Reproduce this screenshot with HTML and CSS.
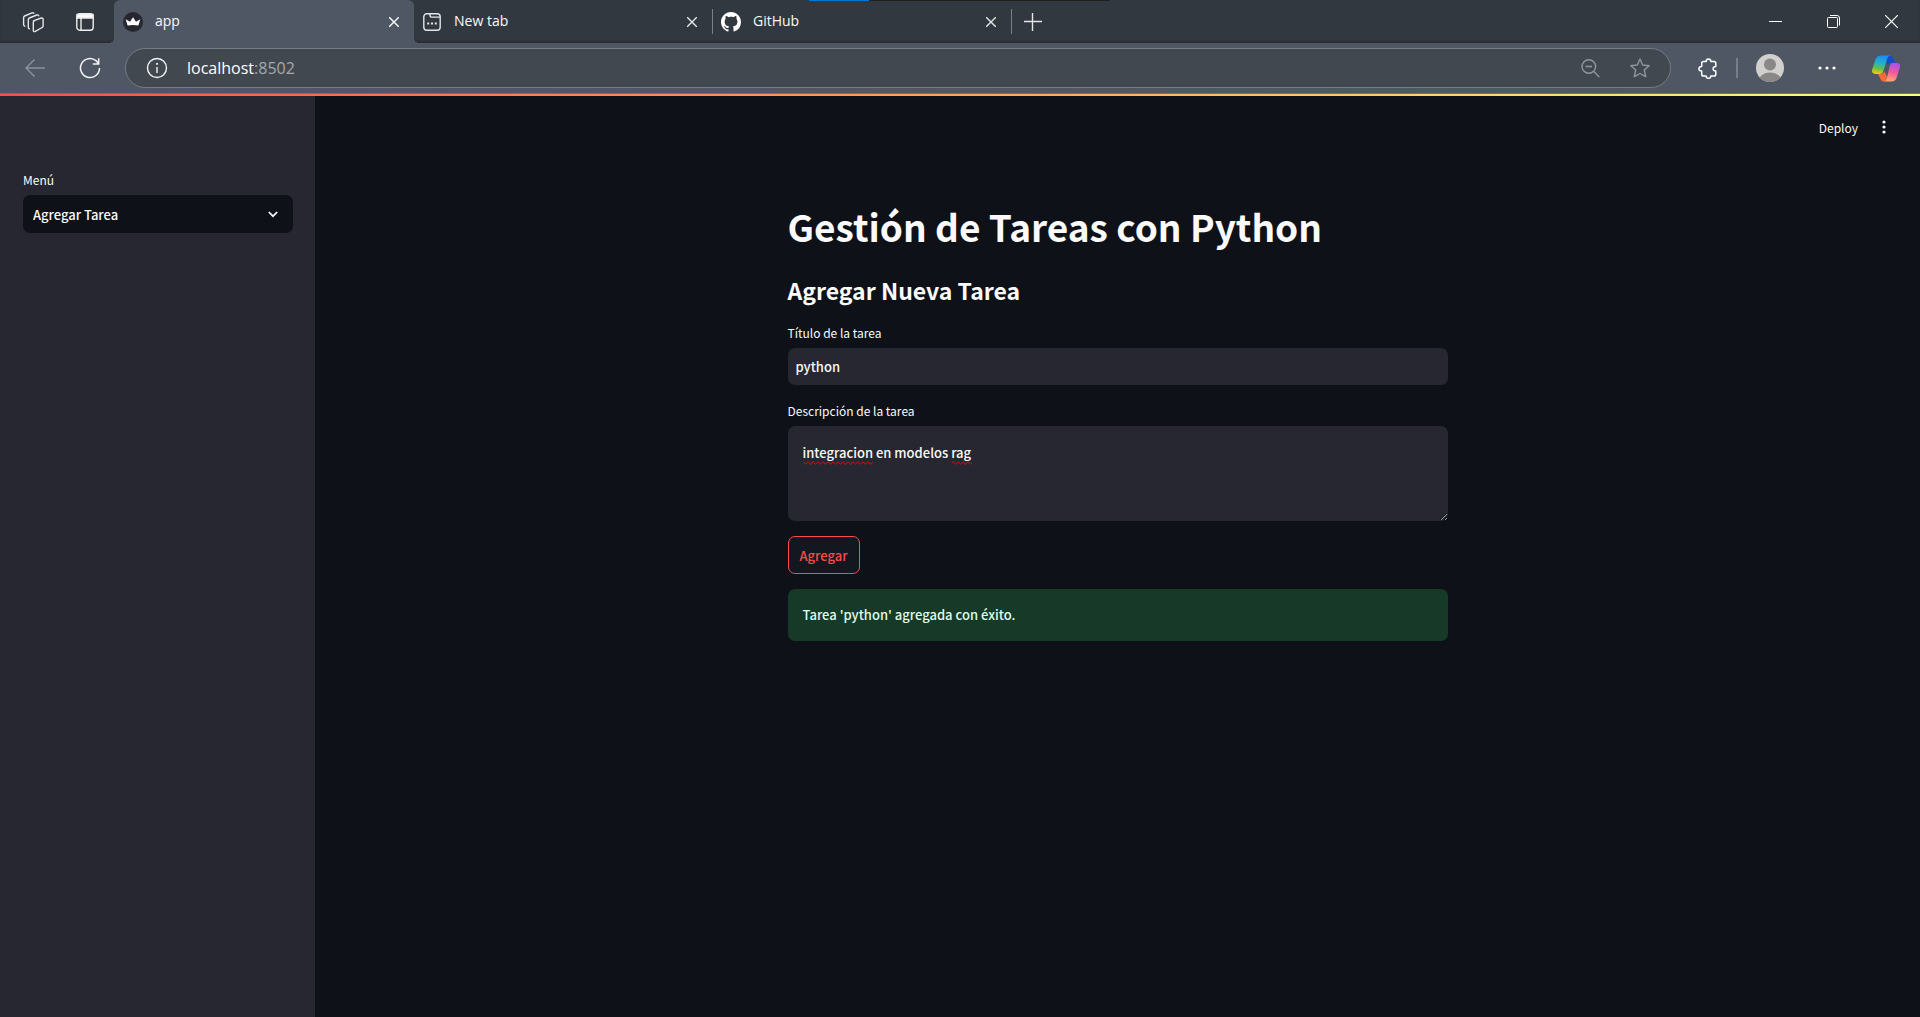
FILE: index.html
```html
<!DOCTYPE html>
<html lang="es">
<head>
<meta charset="utf-8">
<title>app</title>
<link rel="stylesheet" href="styles.css">
</head>
<body>
<header class="browser">
  <div class="tabstrip">
    <div class="tab-tools">
      <button class="icon-btn" aria-label="Workspaces"><svg width="22" height="22" viewBox="0 0 22 22" fill="none" stroke="#e4e6e8" stroke-width="1.4" stroke-linejoin="round" stroke-linecap="round"><path d="M11.400 9.800 19.200 7q1.900-.5 1.900 1.200V15q0 1-1 1.500L13.300 20.400q-1.800.8-2-1V11.400q0-1 .8-1.400zM7.300 17.800q-1-.2-1-1.500V8.800q0-1.300 1-1.800l7.500-3q1.400-.4 1.900.8M2.800 15.200q-1.200-.4-1.200-1.700V6.800q0-1.300 1-1.800l7.400-3.200q1.200-.5 1.900.5"/></svg></button>
      <button class="icon-btn" aria-label="Vertical tabs"><svg width="18" height="18" viewBox="0 0 18 18" fill="none" stroke="#eceeef" stroke-width="1.4"><rect x=".8" y=".8" width="16.400" height="16.400" rx="3"/><path d="M1 1.500h16V5H1z" fill="#fff"/><path d="M5 5v12"/></svg></button>
    </div>
    <div class="tab tab-active">
      <svg width="20" height="20" viewBox="0 0 20 20"><circle cx="10" cy="10" r="10" fill="#262730"/><path d="M2.700 7.300 7 9.800 10 5.300l3 4.500 4.300-2.500-1.900 6.200q-5.400-1-10.800 0z" fill="#fff"/></svg>
      <span class="tab-title">app</span>
      <button class="tab-close" aria-label="Close app"><svg width="10" height="10" viewBox="0 0 10 10" stroke="#fff" stroke-width="1.400"><path d="M0 0l10 10M10 0 0 10"/></svg></button>
    </div>
    <div class="tab tab-ruled">
      <svg width="20" height="18" viewBox="0 0 20 18" fill="none" stroke="#e4e6e8" stroke-width="1.400"><rect x="1.800" y=".8" width="16.400" height="16.400" rx="3"/><path d="M8 1v1.600q0 1.500 1.500 1.500H18"/><path d="M5.200 10.500h2M9 10.500h2M12.800 10.500h2" stroke-width="2"/></svg>
      <span class="tab-title">New tab</span>
      <button class="tab-close" aria-label="Close New tab"><svg width="10" height="10" viewBox="0 0 10 10" stroke="#e4e6e8" stroke-width="1.400"><path d="M0 0l10 10M10 0 0 10"/></svg></button>
    </div>
    <div class="tab tab-ruled">
      <svg width="20" height="20" viewBox="0 0 16 16" fill="#fff"><path d="M8 0C3.580 0 0 3.580 0 8c0 3.540 2.290 6.530 5.470 7.590.4.070.55-.17.55-.38 0-.19-.01-.82-.01-1.490-2.010.37-2.530-.49-2.690-.94-.09-.23-.48-.94-.82-1.130-.28-.15-.68-.52-.01-.53.63-.01 1.080.58 1.230.82.72 1.210 1.870.87 2.330.66.07-.52.28-.87.51-1.070-1.780-.2-3.640-.89-3.640-3.950 0-.87.31-1.590.82-2.150-.08-.2-.36-1.020.08-2.120 0 0 .67-.21 2.200.82.64-.18 1.320-.27 2-.27s1.360.09 2 .27c1.530-1.040 2.200-.82 2.200-.82.44 1.100.16 1.920.08 2.120.51.56.82 1.270.82 2.150 0 3.070-1.870 3.750-3.650 3.950.29.25.54.73.54 1.480 0 1.070-.01 1.930-.01 2.200 0 .21.15.46.55.38A8.010 8.010 0 0 0 16 8c0-4.420-3.580-8-8-8z"/></svg>
      <span class="tab-title">GitHub</span>
      <button class="tab-close" aria-label="Close GitHub"><svg width="10" height="10" viewBox="0 0 10 10" stroke="#e4e6e8" stroke-width="1.400"><path d="M0 0l10 10M10 0 0 10"/></svg></button>
    </div>
    <button class="new-tab" aria-label="New tab"><svg width="18" height="18" viewBox="0 0 18 18" stroke="#e4e6e8" stroke-width="1.400"><path d="M0 8.500h18M8.500 0v18"/></svg></button>
    <div class="window-controls">
      <button aria-label="Minimize"><svg width="13" height="13" viewBox="0 0 13 13" stroke="#fff"><path d="M0 6.500h13"/></svg></button>
      <button aria-label="Restore"><svg width="13" height="13" viewBox="0 0 13 13" fill="none" stroke="#fff"><rect x=".5" y="2.500" width="10" height="10" rx="1"/><path d="M3 .5h7q2.500 0 2.500 2.500v7.500"/></svg></button>
      <button aria-label="Close window"><svg width="13" height="13" viewBox="0 0 13 13" stroke="#fff" stroke-width="1.200"><path d="M0 0l13 13M13 0 0 13"/></svg></button>
    </div>
    <div class="top-progress"></div>
  </div>
  <div class="toolbar">
    <button class="icon-btn" aria-label="Back"><svg width="20" height="18" viewBox="0 0 20 18" fill="none" stroke="#8d939b" stroke-width="1.400"><path d="M20 9H1M9.500.5 1 9l8.500 8.500"/></svg></button>
    <button class="icon-btn" aria-label="Refresh"><svg width="22" height="22" viewBox="0 0 22 22" fill="none" stroke="#f2f3f4" stroke-width="1.500"><path d="M20.500 11a9.500 9.500 0 1 1-3.200-7.100L19.500 6.500M19.700 1.300v5.600h-5.900"/></svg></button>
    <div class="address">
      <svg width="22" height="22" viewBox="0 0 22 22" fill="none" stroke="#f2f3f4" stroke-width="1.400"><circle cx="11" cy="11" r="9.500"/><path d="M11 10v6" /><path d="M11 6v1.800" stroke-width="1.800"/></svg>
      <span class="url">localhost<span class="port">:8502</span></span>
      <button class="icon-btn" aria-label="Zoom out"><svg width="19" height="19" viewBox="0 0 19 19" fill="none" stroke="#92969b" stroke-width="1.400"><circle cx="7.800" cy="7.500" r="6.800"/><path d="M4.500 7.500h6.500M12.800 12.500l5.500 5.500"/></svg></button>
      <button class="icon-btn" aria-label="Add to favorites"><svg width="20" height="20" viewBox="0 0 20 20" fill="none" stroke="#92969b" stroke-width="1.400" stroke-linejoin="round"><path d="M10 1l2.700 6 6.500.7-4.900 4.300 1.400 6.700L10 15.500l-5.700 3.200L5.700 12 .8 7.700 7.300 7z"/></svg></button>
    </div>
    <button class="icon-btn" aria-label="Extensions"><svg width="20" height="21" viewBox="0 0 20 21" fill="none" stroke="#fff" stroke-width="1.500" stroke-linejoin="round"><path d="M5.500 3.500h2.700c0-3.400 4.600-3.400 4.600 0H16q1.800 0 1.800 1.800V8.500c-3.600 0-3.600 4.600 0 4.600v3.100q0 1.800-1.800 1.800h-3.200c0 3.200-4.600 3.200-4.600 0H5.500q-1.800 0-1.800-1.800v-3.100C0 13.100 0 8.500 3.700 8.500V5.300q0-1.800 1.800-1.800z"/></svg></button>
    <div class="divider"></div>
    <button class="icon-btn" aria-label="Profile"><svg width="28" height="28" viewBox="0 0 28 28"><defs><clipPath id="face"><circle cx="14" cy="14" r="14"/></clipPath></defs><g clip-path="url(#face)"><path fill="#d2d0ce" d="M0 0h28v28H0z"/><circle cx="14" cy="10.500" r="6" fill="#8a8886"/><ellipse cx="14" cy="26" rx="11" ry="7.500" fill="#8a8886"/></g></svg></button>
    <button class="icon-btn" aria-label="Settings"><svg width="18" height="4" viewBox="0 0 18 4" fill="#fff"><circle cx="2" cy="2" r="1.600"/><circle cx="9" cy="2" r="1.600"/><circle cx="16" cy="2" r="1.600"/></svg></button>
    <button class="icon-btn copilot" aria-label="Copilot"><svg width="28" height="27" viewBox="0 0 28 27"><defs>
      <linearGradient id="cool" x1=".5" y1="0" x2=".3" y2="1"><stop offset="0" stop-color="#1b8df5"/><stop offset=".4" stop-color="#22b3c8"/><stop offset=".7" stop-color="#65bd52"/><stop offset="1" stop-color="#f5d000"/></linearGradient>
      <linearGradient id="warm" x1=".6" y1="0" x2=".4" y2="1"><stop offset="0" stop-color="#a850f0"/><stop offset=".5" stop-color="#ee5a9c"/><stop offset="1" stop-color="#ffab70"/></linearGradient></defs>
      <path d="M13 1h5.500q2 0 2.700 2.200L23 8h-4q-2.500 0-3.200 2.500z" fill="#1749c8"/>
      <path d="M6 19h3q2.700 0 3.500-2.700L15 22l-2 4.500h-1.500q-2.200 0-2.900-2.200z" fill="#f96a35"/>
      <path d="M9 .5h9q-2 .5-2.800 3l-3.700 12.200Q10.500 19 7.500 19H4q-5 0-3.700-5L3.500 4.500Q5 .5 9 .5z" fill="url(#cool)"/>
      <path d="M20.500 8H24q5 0 3.800 4.500L24.700 22.500Q23.500 26.500 19.500 26.500h-8q2.300 0 3.200-3l3-12Q18.500 8 20.500 8z" fill="url(#warm)"/></svg></button>
  </div>
</header>
<div class="app">
  <aside class="sidebar">
    <label class="label" for="menu">Menú</label>
    <div class="select-wrap">
      <select class="field select" id="menu"><option>Agregar Tarea</option></select>
      <svg class="chevron" width="10" height="7" viewBox="0 0 10 7" fill="none" stroke="#fafafa" stroke-width="1.700"><path d="M.8 1 5 5.200 9.200 1"/></svg>
    </div>
  </aside>
  <main class="main">
    <div class="app-bar">
      <button class="deploy">Deploy</button>
      <button class="icon-btn" aria-label="Main menu"><svg width="4" height="14" viewBox="0 0 4 14" fill="#fafafa"><circle cx="2" cy="2" r="1.600"/><circle cx="2" cy="7" r="1.600"/><circle cx="2" cy="12" r="1.600"/></svg></button>
    </div>
    <div class="content">
      <h1>Gestión de Tareas con Python</h1>
      <h2>Agregar Nueva Tarea</h2>
      <label class="label" for="title">Título de la tarea</label>
      <input class="field title-input" id="title" type="text" value="python">
      <label class="label" for="description">Descripción de la tarea</label>
      <div class="textarea-wrap">
        <textarea class="field description" id="description" spellcheck="false">integracion en modelos rag</textarea>
        <svg class="spelling" width="172" height="4" viewBox="0 0 172 4" fill="none"><defs><pattern id="wave" width="5" height="4" patternUnits="userSpaceOnUse"><path d="M-1.500-.2 0 .8 2.500 3.200 5 .8 6.500-.2" stroke="#e00b0b"/></pattern></defs><path fill="url(#wave)" d="M0 0h70v4H0zM149 0h20v4h-20z"/></svg>
      </div>
      <button class="submit">Agregar</button>
      <div class="alert" role="alert">Tarea 'python' agregada con éxito.</div>
    </div>
  </main>
</div>
</body>
</html>
```
FILE: styles.css
```css
* { box-sizing: border-box; }

body {
  margin: 0;
  min-height: 100vh;
  display: flex;
  flex-direction: column;
  background: #0e1117;
  color: #fafafa;
  font-family: "Noto Sans CJK SC", "Noto Sans", sans-serif;
  font-size: 13px;
  font-weight: 500;
}

button, input, select, textarea { font: inherit; color: inherit; }
button { padding: 0; border: 0; background: none; }
svg { display: block; flex: none; }

/* Browser frame */
.browser { font-family: "Open Sans", "Noto Sans", sans-serif; font-weight: 400; }

.tabstrip {
  position: relative;
  display: flex;
  height: 43px;
  background: #32383f;
  box-shadow: inset 0 -2px 2px #292e34;
}

.tab-tools {
  display: flex;
  align-items: center;
  gap: 32px;
  width: 114px;
  padding-left: 22px;
}

.tab {
  position: relative;
  display: flex;
  align-items: center;
  gap: 12px;
  width: 299px;
  padding: 0 16px 0 8px;
  font-size: 14px;
}

.tab-active { width: 300px; padding: 0 15px 0 9px; background: #4e5763; border-radius: 6px 6px 0 0; }
.tab-active::before,
.tab-active::after {
  content: "";
  position: absolute;
  bottom: 0;
  width: 5px;
  height: 5px;
}
.tab-active::before { left: -5px; background: radial-gradient(circle at 0 0, transparent 5px, #4e5763 5px); }
.tab-active::after { right: -5px; background: radial-gradient(circle at 100% 0, transparent 5px, #4e5763 5px); }

.tab-ruled::after {
  content: "";
  position: absolute;
  right: 0;
  top: 9px;
  width: 1px;
  height: 25px;
  background: #7b8086;
}

.tab-title { flex: 1; line-height: 40px; padding-bottom: 2px; }
.new-tab { padding-left: 12px; }
.window-controls { display: flex; margin-left: auto; }
.window-controls button { display: grid; place-items: center; width: 58px; }

.top-progress {
  position: absolute;
  top: 0;
  left: 809px;
  width: 301px;
  height: 1px;
  background: linear-gradient(90deg, #0078d4 60px, #1f1f1f 60px);
}

.toolbar {
  display: flex;
  align-items: center;
  height: 51px;
  padding: 0 20px 0 25px;
  gap: 34px;
  background: #4e5763;
  border-bottom: 1px solid #6a727c;
}

.address {
  flex: 1;
  display: flex;
  align-items: center;
  gap: 30px;
  height: 40px;
  margin-left: -10px;
  margin-right: -7px;
  padding: 0 20px;
  border: 1px solid #757b83;
  border-radius: 20px;
  background: #414850;
}

.url { flex: 1; margin-left: -11px; font-size: 16px; color: #fff; }
.port { color: #a5a9ad; }
.divider { width: 2px; height: 20px; margin: 0 -16px; background: #787f88; }
.copilot { margin-left: 2px; }

/* Application */
.app {
  flex: 1;
  display: flex;
  border-top: 2px solid;
  border-image: linear-gradient(90deg, #ff4b4b, #fffd80) 1;
}

.sidebar {
  width: 315px;
  padding: 74px 22px 0 23px;
  background: #262730;
}

.label {
  display: block;
  margin-bottom: 5px;
  font-size: 12px;
  font-weight: 400;
  line-height: 20px;
}

.field {
  display: block;
  width: 100%;
  border: 0;
  border-radius: 7px;
  background: #262730;
  outline: 0;
}

.select-wrap { position: relative; }
.select { appearance: none; height: 38px; padding: 0 10px; background: #0e1117; }
.chevron { position: absolute; right: 15px; top: 16px; pointer-events: none; }

.main { flex: 1; }

.app-bar {
  display: flex;
  align-items: center;
  justify-content: flex-end;
  gap: 24px;
  height: 62px;
  padding-right: 34px;
}

.deploy { font-size: 12px; font-weight: 400; }

.content { max-width: 660px; margin: 0 auto; padding: 44px 0 48px; }

h1 { margin: 0; font-size: 37px; line-height: 48px; font-weight: 700; }
h2 { margin: 25px 0 18px; font-size: 23px; line-height: 30px; font-weight: 700; }

.title-input { height: 37px; margin-bottom: 16px; padding: 0 8px; }
.textarea-wrap { position: relative; }
.description { height: 95px; padding: 15px; line-height: 23px; resize: vertical; }
.spelling { position: absolute; left: 15px; top: 35px; pointer-events: none; }

.submit {
  display: block;
  height: 38px;
  margin: 15px 0;
  padding: 0 11px;
  border: 1px solid #ff4b4b;
  border-radius: 7px;
  background: #131720;
  color: #ff4b4b;
}

.alert {
  padding: 15px;
  border-radius: 7px;
  background: #173928;
  color: #dffde9;
  line-height: 22px;
}
```
